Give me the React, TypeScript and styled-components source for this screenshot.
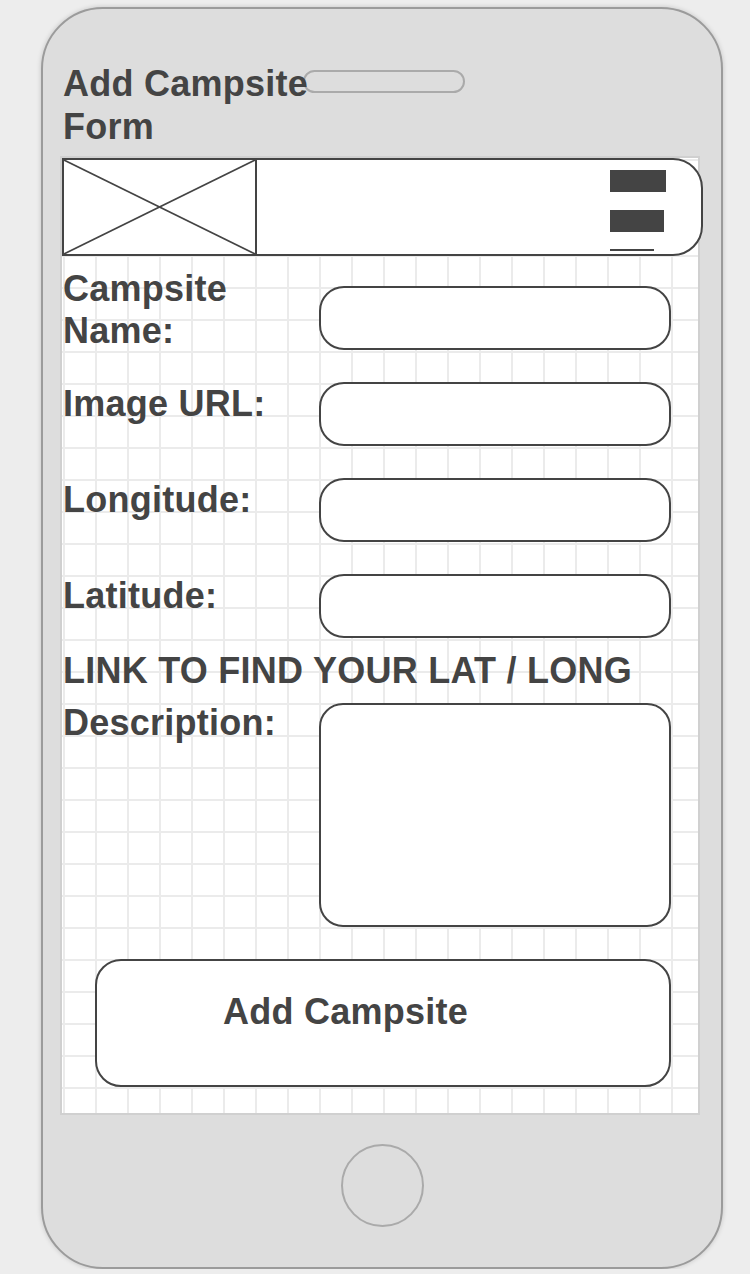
import React, { FC } from 'react';
import styled, { createGlobalStyle } from 'styled-components';

const GlobalStyle = createGlobalStyle`
  body {
    margin: 0;
    background: #ededed;
    font-family: 'Liberation Sans', Arial, Helvetica, sans-serif;
  }
`;

interface FieldProps {
  label: string;
  raise?: number;
}

const Field: FC<FieldProps> = ({ label, raise = -1 }) => (
  <FieldRow>
    <Label $raise={raise}>{label}</Label>
    <TextInput type='text' />
  </FieldRow>
);

const App: FC = () => {
  return (
    <>
      <GlobalStyle />
      <Phone>
        <Speaker />
        <Title>Add Campsite Form</Title>
        <Screen>
          <Header>
            <ImageBox>
              <svg width='100%' height='100%' viewBox='0 0 100 100' preserveAspectRatio='none'>
                <line x1='0' y1='0' x2='100' y2='100' stroke='#444' strokeWidth='1.6' vectorEffect='non-scaling-stroke' />
                <line x1='100' y1='0' x2='0' y2='100' stroke='#444' strokeWidth='1.6' vectorEffect='non-scaling-stroke' />
              </svg>
            </ImageBox>
            <Menu>
              <MenuBar $width={56} $height={22} />
              <MenuBar $width={54} $height={22} />
              <MenuBar $width={44} $height={2} />
            </Menu>
          </Header>
          <Form>
            <Field label='Campsite Name:' raise={18} />
            <Field label='Image URL:' />
            <Field label='Longitude:' />
            <Field label='Latitude:' />
            <LinkText>LINK TO FIND YOUR LAT / LONG</LinkText>
            <FieldRow>
              <Label $raise={1}>Description:</Label>
              <TextArea />
            </FieldRow>
            <SubmitBtn type='button'>Add Campsite</SubmitBtn>
          </Form>
        </Screen>
        <HomeButton />
      </Phone>
    </>
  );
};

export default App;

const Phone = styled.div`
  position: relative;
  box-sizing: border-box;
  width: 682px;
  height: 1262px;
  margin: 7px 0 0 41px;
  padding: 53px 0 0 17px;
  display: flex;
  flex-direction: column;
  background: #dddddd;
  border: 2px solid #9b9b9b;
  border-radius: 62px;
  box-shadow: 0 0 5px rgba(0, 0, 0, 0.18);
`;

const Speaker = styled.div`
  position: absolute;
  left: 260px;
  top: 61px;
  width: 162px;
  height: 23px;
  box-sizing: border-box;
  border: 2px solid #aaaaaa;
  border-radius: 12px;
`;

const textStyle = `
  font-size: 36px;
  line-height: 42px;
  font-weight: 700;
  letter-spacing: 0.25px;
  color: #444444;
`;

const Title = styled.h1`
  position: relative;
  z-index: 1;
  width: 262px;
  margin: 0 0 8px 3px;
  ${textStyle}
  line-height: 43px;
`;

const Screen = styled.div`
  box-sizing: border-box;
  width: 640px;
  height: 959px;
  border: 2px solid #d0d0d0;
  background-color: #ffffff;
  background-image:
    linear-gradient(to right, #ebebeb 2px, transparent 2px),
    linear-gradient(to bottom, #ebebeb 2px, transparent 2px);
  background-size: 32px 32px;
  background-position: 1px 1px;
  display: flex;
  flex-direction: column;
`;

const Header = styled.div`
  box-sizing: border-box;
  flex-shrink: 0;
  width: 641px;
  height: 98px;
  display: flex;
  background: #ffffff;
  border: 2px solid #444444;
  border-radius: 0 30px 30px 0;
`;

const ImageBox = styled.div`
  width: 191px;
  height: 100%;
  border-right: 2px solid #444444;
  svg {
    display: block;
  }
`;

const Menu = styled.div`
  margin: 10px 35px 0 auto;
  display: flex;
  flex-direction: column;
  align-items: flex-start;
  gap: 18px;
  & > :last-child {
    margin-top: -1px;
  }
`;

const MenuBar = styled.div<{ $width: number; $height: number }>`
  width: ${p => p.$width}px;
  height: ${p => p.$height}px;
  background: #444444;
`;

const Form = styled.div`
  display: flex;
  flex-direction: column;
  padding-top: 30px;
`;

const FieldRow = styled.div`
  display: grid;
  grid-template-columns: 256px 352px;
  align-items: start;
  padding-left: 1px;
  & + & {
    margin-top: 32px;
  }
`;

const Label = styled.div<{ $raise: number }>`
  ${textStyle}
  width: 250px;
  margin: ${p => -p.$raise}px 0 -100px;
`;

const TextInput = styled.input`
  box-sizing: border-box;
  width: 352px;
  height: 64px;
  margin: 0;
  padding: 0 20px;
  background: #ffffff;
  border: 2px solid #444444;
  border-radius: 25px;
  outline: none;
`;

const LinkText = styled.div`
  ${textStyle}
  margin-top: 12px;
  padding-left: 1px;
  & + ${FieldRow} {
    margin-top: 11px;
  }
`;

const TextArea = styled.textarea`
  box-sizing: border-box;
  width: 352px;
  height: 224px;
  margin: 0;
  padding: 16px 20px;
  background: #ffffff;
  border: 2px solid #444444;
  border-radius: 24px;
  outline: none;
  resize: none;
`;

const SubmitBtn = styled.button`
  box-sizing: border-box;
  width: 576px;
  height: 128px;
  margin: 32px 0 0 33px;
  padding: 30px 0 0 126px;
  display: flex;
  align-items: flex-start;
  background: #ffffff;
  border: 2px solid #444444;
  border-radius: 26px;
  font-family: inherit;
  ${textStyle}
`;

const HomeButton = styled.div`
  box-sizing: border-box;
  width: 83px;
  height: 83px;
  margin: 29px 0 0 281px;
  border: 2px solid #aaaaaa;
  border-radius: 50%;
`;
